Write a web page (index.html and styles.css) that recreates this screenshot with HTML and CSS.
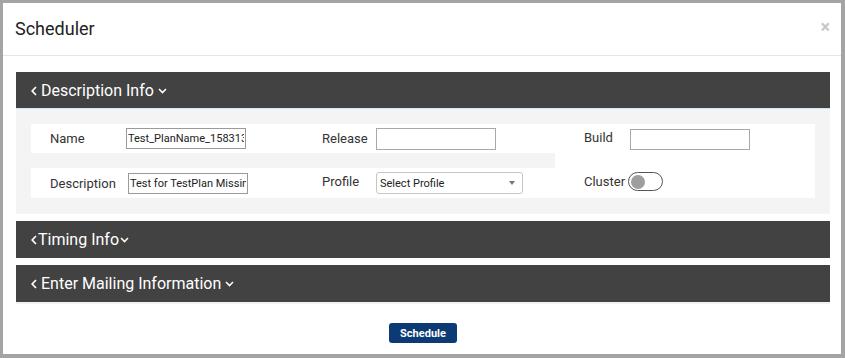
FILE: index.html
```html
<!DOCTYPE html>
<html>
<head>
<meta charset="utf-8">
<link rel="stylesheet" href="styles.css">
</head>
<body>
<div class="modal">
  <div class="modal-header">
    <span class="title">Scheduler</span>
    <span class="close">×</span>
  </div>
  <div class="modal-content">
    <div class="panel">
      <div class="panel-head spaced">
        <svg class="chev-left" width="6" height="10" viewBox="0 0 6 10"><path d="M5 1 L1.2 5 L5 9" fill="none" stroke="#fff" stroke-width="1.7"/></svg>
        <span>Description Info</span>
        <svg class="chev-down" width="9" height="6" viewBox="0 0 9 6"><path d="M1 1 L4.5 4.6 L8 1" fill="none" stroke="#fff" stroke-width="1.5"/></svg>
      </div>
      <div class="panel-body">
        <div class="col">
          <div class="cell">
            <span class="label lbl-c1">Name</span>
            <input class="text-input dark" type="text" value="Test_PlanName_1583139201">
          </div>
          <div class="cell">
            <span class="label lbl-c1">Description</span>
            <input class="text-input dark shift" type="text" value="Test for TestPlan Missing">
          </div>
        </div>
        <div class="col">
          <div class="cell">
            <span class="label lbl-c2">Release</span>
            <input class="text-input light tall" type="text" value="">
          </div>
          <div class="cell">
            <span class="label lbl-c2 up">Profile</span>
            <div class="select">
              <span>Select Profile</span>
              <span class="caret"></span>
            </div>
          </div>
        </div>
        <div class="col col-solid">
          <div class="solid-row first">
            <span class="label lbl-c3 up">Build</span>
            <input class="text-input light" type="text" value="">
          </div>
          <div class="solid-row">
            <span class="label">Cluster</span>
            <span class="toggle"><span class="knob"></span></span>
          </div>
        </div>
      </div>
    </div>
    <div class="panel gap">
      <div class="panel-head">
        <svg class="chev-left tight" width="6" height="10" viewBox="0 0 6 10"><path d="M5 1 L1.2 5 L5 9" fill="none" stroke="#fff" stroke-width="1.7"/></svg>
        <span>Timing Info</span>
        <svg class="chev-down tight" width="9" height="6" viewBox="0 0 9 6"><path d="M1 1 L4.5 4.6 L8 1" fill="none" stroke="#fff" stroke-width="1.5"/></svg>
      </div>
    </div>
    <div class="panel gap">
      <div class="panel-head spaced">
        <svg class="chev-left" width="6" height="10" viewBox="0 0 6 10"><path d="M5 1 L1.2 5 L5 9" fill="none" stroke="#fff" stroke-width="1.7"/></svg>
        <span>Enter Mailing Information</span>
        <svg class="chev-down" width="9" height="6" viewBox="0 0 9 6"><path d="M1 1 L4.5 4.6 L8 1" fill="none" stroke="#fff" stroke-width="1.5"/></svg>
      </div>
      <div class="panel-foot-line"></div>
    </div>
    <div class="footer">
      <button class="btn">Schedule</button>
    </div>
  </div>
</div>
</body>
</html>
```
FILE: styles.css
```css
* { box-sizing: border-box; }
html, body { margin: 0; padding: 0; }
body {
  background: #a4a4a4;
  font-family: Roboto, "Liberation Sans", Arial, sans-serif;
  width: 845px;
  height: 358px;
  overflow: hidden;
}
.modal {
  margin: 3px 4px 4px 3px;
  height: 351px;
  background: #fff;
}
.modal-header {
  height: 53px;
  border-bottom: 1px solid #e5e5e5;
  display: flex;
  align-items: center;
  justify-content: space-between;
  padding: 0 11px 0 12px;
}
.title {
  font-size: 18px;
  color: #222;
  margin-top: -2px;
}
.close {
  font-size: 18px;
  font-weight: 700;
  color: #c8c8c8;
  margin-top: -6px;
}
.modal-content {
  padding: 16px 11px 0 13px;
}
.panel-head {
  height: 37px;
  background: #424242;
  color: #fff;
  display: flex;
  align-items: center;
  padding-left: 15px;
  font-size: 16px;
  font-weight: 400;
  border-bottom: 1px solid #c9ecf3;
}
.panel.gap .panel-head { border-bottom: none; }
.panel.gap { margin-top: 7px; }
.chev-left { margin-right: 4px; margin-top: 1px; }
.chev-down { margin-left: 4px; margin-top: 1px; }
.chev-left.tight { margin-right: 1px; }
.chev-down.tight { margin-left: 1px; }
.panel-body {
  background: #f4f4f4;
  padding: 15px 15px 16px 15px;
  display: grid;
  grid-template-columns: 261px 263px 260px;
}
.col {
  display: flex;
  flex-direction: column;
  gap: 15px;
}
.cell {
  background: #fff;
  height: 29px;
  display: flex;
  align-items: center;
  font-size: 13px;
  color: #333;
}
.cell + .cell { height: 30px; }
.col:nth-child(1) .cell { padding-left: 19px; }
.col:nth-child(2) .cell { padding-left: 30px; }
.col-solid {
  background: #fff;
  gap: 0;
  padding-left: 29px;
  padding-top: 4px;
}
.solid-row {
  display: flex;
  align-items: center;
  height: 22px;
  font-size: 13px;
  color: #333;
}
.solid-row + .solid-row { margin-top: 22px; height: 19px; }
.label { color: #333; font-size: 13px; }
.lbl-c1 { width: 76px; }
.lbl-c2 { width: 54px; }
.lbl-c3 { width: 46px; }
.up { margin-top: -4px; }
.text-input {
  width: 120px;
  height: 21px;
  border: 1px solid #9a9a9a;
  background: #fff;
  font-family: Roboto, "Liberation Sans", Arial, sans-serif;
  font-size: 11px;
  color: #222;
  padding: 0 1px;
  margin: 0;
  outline: none;
}
.text-input.shift { margin-left: 2px; }
.text-input.light { border-color: #a8a8a8; width: 120px; }
.text-input.tall { height: 22px; }
.select {
  width: 147px;
  height: 22px;
  border: 1px solid #c6c6c6;
  border-radius: 3px;
  background: #fff;
  font-size: 11px;
  color: #222;
  display: flex;
  align-items: center;
  justify-content: space-between;
  padding: 0 7px 0 3px;
}
.caret {
  width: 0;
  height: 0;
  border-left: 3.5px solid transparent;
  border-right: 3.5px solid transparent;
  border-top: 4px solid #777;
}
.toggle {
  margin-left: 3px;
  width: 35px;
  height: 19px;
  border: 1.5px solid #555;
  border-radius: 10px;
  display: flex;
  align-items: center;
  padding-left: 2px;
}
.knob {
  width: 14px;
  height: 14px;
  border-radius: 50%;
  background: #9e9e9e;
}
.panel-foot-line {
  height: 2px;
  background: #f2f2f2;
}
.footer {
  display: flex;
  justify-content: center;
  padding-top: 19px;
}
.btn {
  width: 68px;
  height: 20px;
  border: none;
  border-radius: 3px;
  background: #0c3a74;
  color: #fff;
  font-family: Roboto, "Liberation Sans", Arial, sans-serif;
  font-size: 11px;
  font-weight: 700;
  padding: 0;
}
```
